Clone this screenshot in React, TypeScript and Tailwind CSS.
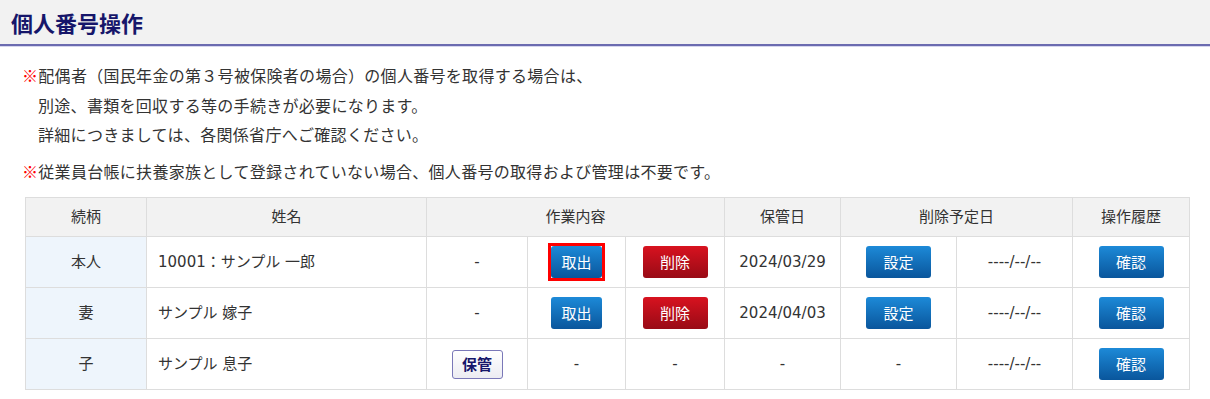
const FONT = {
  fontFamily: '"Noto Sans CJK JP", "Noto Sans", sans-serif',
};

const TABLE_FONT = {
  fontFamily: '"DejaVu Sans", "Noto Sans CJK JP", sans-serif',
};

type Row = {
  relation: string;
  name: string;
  storable: boolean;
  canTake: boolean;
  storedAt: string;
  focused?: boolean;
};

const ROWS: Row[] = [
  { relation: "本人", name: "10001：サンプル 一郎", storable: false, canTake: true, storedAt: "2024/03/29", focused: true },
  { relation: "妻", name: "サンプル 嫁子", storable: false, canTake: true, storedAt: "2024/04/03" },
  { relation: "子", name: "サンプル 息子", storable: true, canTake: false, storedAt: "-" },
];

function BlueButton({ label, narrow = false }: { label: string; narrow?: boolean }) {
  return (
    <button
      type="button"
      className={
        "h-[32px] rounded-[3px] bg-gradient-to-b from-[#1d8ad8] to-[#0a569c] text-[15px] text-white align-middle " +
        (narrow ? "w-[51px]" : "w-[65px]")
      }
      style={FONT}
    >
      {label}
    </button>
  );
}

function RedButton({ label }: { label: string }) {
  return (
    <button
      type="button"
      className="h-[32px] w-[65px] rounded-[3px] bg-gradient-to-b from-[#d8121f] to-[#990b16] text-[15px] text-white align-middle"
      style={FONT}
    >
      {label}
    </button>
  );
}

function StoreButton() {
  return (
    <button
      type="button"
      className="h-[29px] w-[51px] rounded-[3px] border border-[#7a78b8] bg-gradient-to-b from-white to-[#ececf2] text-[15px] font-bold text-[#16166a] align-middle"
      style={FONT}
    >
      保管
    </button>
  );
}

const TH = "border border-[#dddddd] bg-[#f2f2f2] font-normal text-[#333333] h-[39px]";
const TD = "border border-[#dddddd] h-[51px] text-center text-[#333333]";

export default function App() {
  return (
    <div className="w-[1210px] h-[399px] bg-white overflow-hidden" style={FONT}>
      <div className="h-[46px] bg-[#f2f2f2] border-b-2 border-[#6b6bb0] shadow-[0_1px_0_#d6d6ee] flex items-center pl-[11px]">
        <h1 className="text-[22px] font-bold text-[#16166a] leading-none">個人番号操作</h1>
      </div>

      <div className="pl-[22px] text-[16px] tracking-[0.3px] text-[#333333] leading-[29.5px]">
        <p className="mt-[15px]">
          <span className="text-[#ff0000]">※</span>配偶者（国民年金の第３号被保険者の場合）の個人番号を取得する場合は、
          <br />
          <span className="pl-[16px]">別途、書類を回収する等の手続きが必要になります。</span>
          <br />
          <span className="pl-[16px]">詳細につきましては、各関係省庁へご確認ください。</span>
        </p>
        <p className="mt-[7px]">
          <span className="text-[#ff0000]">※</span>従業員台帳に扶養家族として登録されていない場合、個人番号の取得および管理は不要です。
        </p>
      </div>

      <table className="ml-[25px] mt-[11px] w-[1164px] table-fixed border-collapse text-[15px]" style={TABLE_FONT}>
        <colgroup>
          <col className="w-[121px]" />
          <col className="w-[280px]" />
          <col className="w-[101px]" />
          <col className="w-[98px]" />
          <col className="w-[99px]" />
          <col className="w-[116px]" />
          <col className="w-[116px]" />
          <col className="w-[116px]" />
          <col className="w-[117px]" />
        </colgroup>
        <thead>
          <tr>
            <th className={TH}>続柄</th>
            <th className={TH}>姓名</th>
            <th className={TH} colSpan={3}>作業内容</th>
            <th className={TH}>保管日</th>
            <th className={TH} colSpan={2}>削除予定日</th>
            <th className={TH}>操作履歴</th>
          </tr>
        </thead>
        <tbody>
          {ROWS.map((row, i) => (
            <tr key={i}>
              <td className={TD + " bg-[#eef5fc]"}>{row.relation}</td>
              <td className={TD + " !text-left pl-[11px]"}>{row.name}</td>
              <td className={TD}>{row.storable ? <StoreButton /> : "-"}</td>
              <td className={TD}>
                {!row.canTake ? (
                  "-"
                ) : row.focused ? (
                  <span className="inline-flex border-[3px] border-[#ff0000] align-middle">
                    <BlueButton label="取出" narrow />
                  </span>
                ) : (
                  <BlueButton label="取出" narrow />
                )}
              </td>
              <td className={TD}>{row.canTake ? <RedButton label="削除" /> : "-"}</td>
              <td className={TD}>{row.storedAt}</td>
              <td className={TD}>{row.canTake ? <BlueButton label="設定" /> : "-"}</td>
              <td className={TD}>----/--/--</td>
              <td className={TD}>
                <BlueButton label="確認" />
              </td>
            </tr>
          ))}
        </tbody>
      </table>
    </div>
  );
}
